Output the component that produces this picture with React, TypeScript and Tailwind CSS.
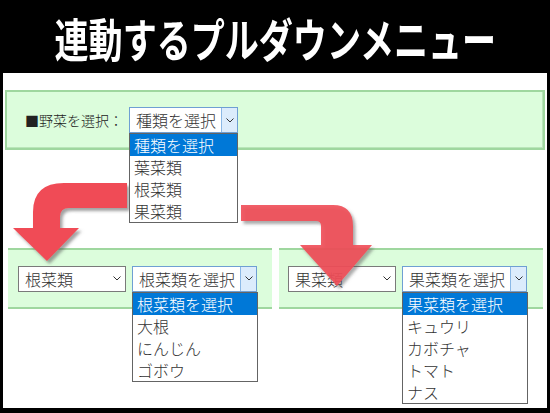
import React from 'react';

const FONT = { fontFamily: '"Noto Sans CJK JP", "Noto Sans", sans-serif' };

type SelectProps = {
  width: string;
  value: string;
  open?: boolean;
  options?: string[];
  listWidth?: string;
};

const Chevron = () => (
  <svg width="8" height="5" viewBox="0 0 8 5" className="block">
    <polyline points="0.5,0.5 4,4 7.5,0.5" fill="none" stroke="#333" strokeWidth="1" />
  </svg>
);

const FakeSelect = ({ width, value, open, options = [], listWidth }: SelectProps) => (
  <div className={`relative ${width}`}>
    <div
      className={`flex h-[26px] items-center border bg-white pl-[6px] text-[16px] font-light text-[#333] ${
        open ? 'border-[#6f9fd3]' : 'border-[#7a7a7a]'
      }`}
    >
      <span className="flex-1 whitespace-nowrap leading-[24px]">{value}</span>
      {open ? (
        <span className="flex h-full w-[16px] shrink-0 items-center justify-center border-l border-[#8ab8e6] bg-[#dcecfc]">
          <Chevron />
        </span>
      ) : (
        <span className="flex h-full w-[16px] shrink-0 items-center justify-center">
          <Chevron />
        </span>
      )}
    </div>
    {open && (
      <ul
        className={`absolute left-0 top-full z-20 border border-[#646464] bg-white ${listWidth ?? 'w-full'}`}
      >
        {options.map((o, i) => (
          <li
            key={o}
            className={`h-[22px] pl-[4px] text-[16px] font-light leading-[22px] whitespace-nowrap ${
              i === 0 ? 'bg-[#0078d7] text-white' : 'text-[#333]'
            }`}
          >
            {o}
          </li>
        ))}
      </ul>
    )}
  </div>
);

const Arrows = () => (
  <svg
    className="pointer-events-none absolute inset-0 z-10"
    width="550"
    height="413"
    viewBox="0 0 550 413"
  >
    <defs>
      <filter id="sh" x="-20%" y="-20%" width="140%" height="140%">
        <feDropShadow dx="2.5" dy="3" stdDeviation="1.6" floodColor="#555" floodOpacity="0.55" />
      </filter>
    </defs>
    <path
      d="M127,183 L64,183 Q33,183 33,212 L33,228 L13,228 L47,261 L79,228 L60,228 L60,217 Q60,208 69,208 L127,208 Z"
      fill="#f04c56"
      filter="url(#sh)"
    />
    <path
      d="M241,205 L333,205 Q353,205 353,226 L353,245 L372,245 L337,286 L300,245 L321,245 L321,226 Q321,221 316,221 L241,221 Z"
      fill="#f04c56"
      fillOpacity="0.9"
      filter="url(#sh)"
    />
  </svg>
);

export default function App() {
  return (
    <div className="relative h-[413px] w-[550px] overflow-hidden bg-black" style={FONT}>
      <header className="flex h-[73px] items-center justify-center">
        <h1 className="inline-block scale-x-[0.74] whitespace-nowrap text-[46px] font-bold leading-none text-white">
          連動するプルダウンメニュー
        </h1>
      </header>

      <main className="mx-[3px] h-[335px] bg-white px-[2px] pt-[17px]">
        <div className="flex h-[60px] items-center border-2 border-[#9fd79f] bg-[#dcfddc] pl-[18px] shadow-[inset_-1px_-1px_0_#b9e6b9]">
          <span className="w-[104px] whitespace-nowrap text-[14px] font-light text-[#222]">■野菜を選択：</span>
          <FakeSelect
            width="w-[109px]"
            value="種類を選択"
            open
            options={['種類を選択', '葉菜類', '根菜類', '果菜類']}
          />
        </div>

        <div className="mt-[98px] flex gap-[7px] pl-[3px]">
          <div className="flex h-[61px] w-[264px] items-center gap-[6px] border-y-2 border-[#9fd79f] bg-[#dcfddc] pl-[10px]">
            <FakeSelect width="w-[108px]" value="根菜類" />
            <FakeSelect
              width="w-[125px]"
              listWidth="w-[126px]"
              value="根菜類を選択"
              open
              options={['根菜類を選択', '大根', 'にんじん', 'ゴボウ']}
            />
          </div>
          <div className="flex h-[61px] w-[264px] items-center gap-[6px] border-y-2 border-[#9fd79f] bg-[#dcfddc] pl-[9px]">
            <FakeSelect width="w-[108px]" value="果菜類" />
            <FakeSelect
              width="w-[125px]"
              listWidth="w-[126px]"
              value="果菜類を選択"
              open
              options={['果菜類を選択', 'キュウリ', 'カボチャ', 'トマト', 'ナス']}
            />
          </div>
        </div>
      </main>

      <Arrows />
    </div>
  );
}
